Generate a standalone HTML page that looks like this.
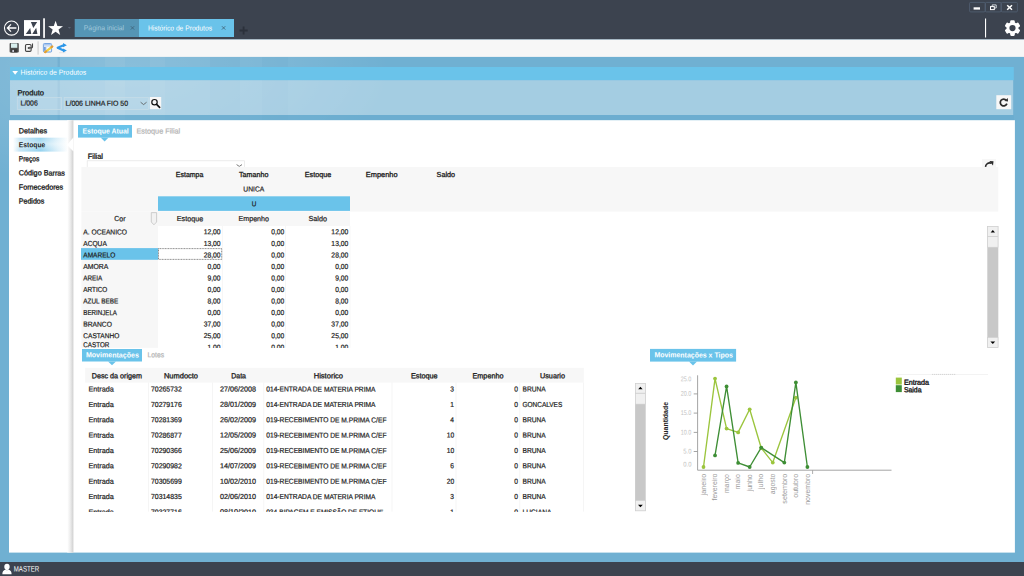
<!DOCTYPE html>
<html lang="pt-BR"><head><meta charset="utf-8"><title>Histórico de Produtos</title>
<style>

html,body{margin:0;padding:0;}
body{width:1024px;height:576px;overflow:hidden;background:#70b0d2;font-family:"Liberation Sans",sans-serif;}
#app{position:relative;width:1024px;height:576px;overflow:hidden;}
svg.bg{position:absolute;left:0;top:0;}
.t{position:absolute;white-space:nowrap;display:block;}
.clip{position:absolute;left:0;top:0;width:1024px;overflow:hidden;}
.rot{position:absolute;width:0;height:0;transform:rotate(-90deg);transform-origin:0 0;}

</style></head>
<body>
<div id="app">
<svg class="bg" width="1024" height="576" viewBox="0 0 1024 576">
<defs>
<radialGradient id="glow" cx="0.5" cy="0.5" r="0.5"><stop offset="0" stop-color="#fff" stop-opacity="0.18"/><stop offset="0.6" stop-color="#fff" stop-opacity="0.09"/><stop offset="1" stop-color="#fff" stop-opacity="0"/></radialGradient>
<linearGradient id="navsel" x1="0" x2="1" y1="0" y2="0"><stop offset="0" stop-color="#fff"/><stop offset="0.12" stop-color="#c2e4f5"/><stop offset="0.5" stop-color="#8fd0ee"/><stop offset="0.8" stop-color="#d8eef9"/><stop offset="1" stop-color="#fff"/></linearGradient>
<linearGradient id="navv" x1="0" x2="0" y1="0" y2="1"><stop offset="0" stop-color="#fff" stop-opacity="0.1"/><stop offset="0.45" stop-color="#fff" stop-opacity="0.45"/><stop offset="1" stop-color="#fff" stop-opacity="0"/></linearGradient>
<linearGradient id="shad" x1="0" x2="1" y1="0" y2="0"><stop offset="0" stop-color="#fff"/><stop offset="0.5" stop-color="#ececec"/><stop offset="1" stop-color="#cfcfcf"/></linearGradient>
</defs>
<rect width="1024" height="576" fill="#70b0d2"/>
<ellipse cx="130" cy="70" rx="260" ry="120" fill="url(#glow)"/>
<rect x="57.6" y="57" width="2.2" height="63" fill="#4f93bd" opacity="0.28"/><rect x="105" y="57" width="20" height="63" fill="#fff" opacity="0.05"/><rect x="150" y="57" width="15" height="63" fill="#fff" opacity="0.045"/><rect x="210" y="57" width="30" height="63" fill="#3f86b3" opacity="0.06"/><rect x="262" y="57" width="26" height="63" fill="#3f86b3" opacity="0.05"/>
<rect width="1024" height="39.5" fill="#3c434f"/>
<rect y="39.5" width="1024" height="17.4" fill="#f7f7f7"/>
<rect x="74.7" y="19" width="64.3" height="18" fill="#5595b5"/>
<rect x="139" y="19" width="95" height="18" fill="#6ac3ea"/>
<circle cx="11.55" cy="28.05" r="7.1" fill="none" stroke="#fff" stroke-width="1.1"/>
<path d="M16.4 28H7.6M11 24.4L7.4 28L11 31.6" fill="none" stroke="#fff" stroke-width="1.3"/>
<rect x="24" y="20.1" width="16" height="15.8" fill="#fff"/>
<path d="M30.9 22H37.2L33.3 27.9Z M25.8 34H31.3L30.2 27.9Z M32.3 34H37.4L36.2 27.7Z" fill="#3c434f"/>
<rect x="43.2" y="18.3" width="1.7" height="19.6" fill="#fff"/>
<polygon points="55.60,20.80 57.42,26.09 63.02,26.19 58.55,29.56 60.18,34.91 55.60,31.70 51.02,34.91 52.65,29.56 48.18,26.19 53.78,26.09" fill="#fff"/>
<path d="M67.8 26.9H71L69.4 28.8Z" fill="#5b6473"/>
<path d="M130.8 26.2L134.2 29.6M134.2 26.2L130.8 29.6" stroke="#3d6279" stroke-width="0.8" fill="none"/>
<path d="M221.9 26.2L225.3 29.6M225.3 26.2L221.9 29.6" stroke="#3f5f73" stroke-width="0.8" fill="none"/>
<path d="M243.6 26.4V34.6M239.5 30.5H247.7" stroke="#2b313b" stroke-width="1.8" fill="none"/>
<rect x="969.6" y="2.4" width="15.5" height="9.5" rx="1" fill="none" stroke="#56657a" stroke-width="0.7"/>
<rect x="985.4" y="2.4" width="15.6" height="9.5" rx="1" fill="none" stroke="#56657a" stroke-width="0.7"/>
<rect x="1001.3" y="2.4" width="16.1" height="9.5" rx="1" fill="none" stroke="#56657a" stroke-width="0.7"/>
<rect x="973.6" y="7.3" width="6.4" height="2.3" fill="#fff"/>
<path d="M992.2 6.6V4.9H996.2V8H994.6" fill="none" stroke="#dfe3e8" stroke-width="0.9"/><rect x="990.5" y="6.6" width="3.8" height="3" fill="none" stroke="#fff" stroke-width="1"/>
<path d="M1007.2 5.2L1012 9.8M1012 5.2L1007.2 9.8" stroke="#fff" stroke-width="1.5" fill="none"/>
<rect x="985" y="18.5" width="1.1" height="19" fill="#fff"/>
<g transform="translate(1012.5,28.1)">
<rect x="-2.3" y="-7.8" width="4.6" height="4.5" rx="1.1" fill="#fff" transform="rotate(0)"/>
<rect x="-2.3" y="-7.8" width="4.6" height="4.5" rx="1.1" fill="#fff" transform="rotate(60)"/>
<rect x="-2.3" y="-7.8" width="4.6" height="4.5" rx="1.1" fill="#fff" transform="rotate(120)"/>
<rect x="-2.3" y="-7.8" width="4.6" height="4.5" rx="1.1" fill="#fff" transform="rotate(180)"/>
<rect x="-2.3" y="-7.8" width="4.6" height="4.5" rx="1.1" fill="#fff" transform="rotate(240)"/>
<rect x="-2.3" y="-7.8" width="4.6" height="4.5" rx="1.1" fill="#fff" transform="rotate(300)"/>
<circle r="6" fill="#fff"/><circle r="3.1" fill="#3c434f"/></g>
<rect x="9.6" y="43.1" width="9.2" height="9.3" rx="0.9" fill="#4d4d4d"/><rect x="11" y="43.4" width="6.3" height="4.4" fill="#d9efee"/><rect x="11.2" y="49.3" width="6" height="3.1" fill="#3a3a3a"/><rect x="12.3" y="49.9" width="1.7" height="2.1" fill="#c9c9d6"/>
<rect x="25.5" y="44.5" width="5.6" height="6.9" rx="1.2" fill="#f7f7f7" stroke="#444" stroke-width="1.15"/><path d="M32.5 43.4V47Q32.5 47.9 31.6 47.9H29.2" fill="none" stroke="#444" stroke-width="1.1"/><path d="M27.3 47.9L29.5 46.4V49.4Z" fill="#333"/>
<rect x="37.5" y="41.3" width="1.2" height="13.3" fill="#d2d2d2"/>
<rect x="43.4" y="43.5" width="8.2" height="8.6" rx="1" fill="#d5e3f6" stroke="#6a9ee0" stroke-width="0.9"/><rect x="43.9" y="44" width="7.2" height="1.3" fill="#a9c6ee"/><rect x="44.3" y="47" width="1.2" height="3.8" fill="#4a7fcf"/><rect x="47" y="47" width="3.6" height="4" fill="#fff" fill-opacity="0.8"/><path d="M45.2 52.1L52.2 46.6" stroke="#f3cf3a" stroke-width="2.1" stroke-linecap="round"/><path d="M45.1 52.2L46.2 51.3M51.4 47.2L52.3 46.5" stroke="#e29a3a" stroke-width="2.1" stroke-linecap="round"/>
<path d="M57.7 47.8L63.6 45.2M57.7 47.8L63.6 50.4" stroke="#2e97e8" stroke-width="2.2" stroke-linecap="round" fill="none"/><path d="M63 43.1L66.9 45.3L63 47.3Z M63 48.4L66.9 50.4L63 52.4Z" fill="#2e97e8"/><rect x="59" y="52.5" width="6.5" height="0.6" fill="#ccc" opacity="0.7"/>
<rect x="10" y="67" width="1003.8" height="13.2" fill="#6ac3ea"/>
<rect x="10" y="80.2" width="1003.2" height="34.8" fill="#fff" fill-opacity="0.37"/>
<rect x="10" y="115" width="1004" height="5" fill="#69abcf" opacity="0.6"/>
<path d="M12.3 71H18L15.15 74.7Z" fill="#fff"/>
<rect x="17.3" y="97.4" width="44.2" height="12" fill="#fff" fill-opacity="0.08" stroke="#c6dce8" stroke-width="0.8"/>
<rect x="64.2" y="97.4" width="84.3" height="12" fill="#fff" fill-opacity="0.08" stroke="#c6dce8" stroke-width="0.8"/>
<path d="M140.6 102.2L143.6 104.6L146.6 102.2" fill="none" stroke="#555" stroke-width="0.8"/>
<rect x="149.8" y="97" width="11.4" height="12.2" fill="#f7f7f7"/>
<circle cx="154.5" cy="102.2" r="2.7" fill="none" stroke="#111" stroke-width="1.2"/><path d="M156.6 104.4L159.6 107.3" stroke="#111" stroke-width="1.7" stroke-linecap="round"/>
<rect x="996.3" y="95.2" width="14.9" height="14" fill="#f7f7f7"/>
<path d="M1006.3 100.3A3.4 3.4 0 1 0 1006.9 103.6" fill="none" stroke="#2b2b2b" stroke-width="1.75"/><path d="M1004.4 100.9L1008 101.4L1007.8 97.9Z" fill="#333"/>
<rect x="9" y="120.2" width="1005.9" height="432.4" fill="#fff"/>
<rect x="13" y="137.7" width="55" height="13.9" fill="url(#navsel)"/><rect x="13" y="137.7" width="55" height="13.9" fill="url(#navv)"/>
<rect x="67.3" y="120.2" width="6.1" height="432.4" fill="url(#shad)"/>
<path d="M73.5 137.3L67 145L73.5 151.6Z" fill="#fff"/>
<rect x="78" y="125" width="54" height="12.6" fill="#6ac3ea"/><path d="M100.6 137.5H108.6L104.6 141.4Z" fill="#6ac3ea"/>
<rect x="87.2" y="160.8" width="157.4" height="10" fill="#fff" stroke="#e3e3e3" stroke-width="0.7"/>
<path d="M236.6 164.6L239.3 166.4L242 164.6" fill="none" stroke="#555" stroke-width="0.8"/>
<rect x="982" y="159" width="14" height="10" fill="#f7f7f7"/>
<path d="M985.5 167.4A4.2 4.2 0 0 1 991.4 163.3" fill="none" stroke="#2b2b2b" stroke-width="1.6"/><path d="M989.3 160.9L993.5 161.2L993 165.6Z" fill="#2b2b2b"/>
<rect x="81.4" y="166.9" width="916.9" height="44.7" fill="#f7f7f7"/>
<rect x="81.4" y="211.5" width="268.6" height="14.6" fill="#f7f7f7"/>
<rect x="81.4" y="226" width="76.7" height="121.8" fill="#f7f7f7"/>
<rect x="158" y="196.3" width="192" height="14.6" fill="#6ac3ea"/>
<rect x="81" y="248.1" width="77.1" height="11.7" fill="#6ac3ea"/>
<path d="M151.3 212.6H156.6V222L153.95 224.8L151.3 222Z" fill="#f2f2f2" stroke="#bdbdbd" stroke-width="0.7"/>
<rect x="221.9" y="226" width="0.8" height="121.8" fill="#f4f4f4"/><rect x="285" y="226" width="0.8" height="121.8" fill="#f4f4f4"/><rect x="349.6" y="226" width="0.8" height="121.8" fill="#f6f6f6"/>
<rect x="158.5" y="248.6" width="63.2" height="10.8" fill="#fff" stroke="#555" stroke-width="0.7" stroke-dasharray="1 0.6"/>
<rect x="987.3" y="226" width="11.00" height="121.70" fill="#c8c8c8"/><rect x="987.60" y="226.30" width="10.40" height="10.10" fill="#f0f0f0" stroke="#cfcfcf" stroke-width="0.6"/><rect x="987.60" y="236.70" width="10.40" height="10.50" fill="#f0f0f0" stroke="#cfcfcf" stroke-width="0.6"/><rect x="987.60" y="337.50" width="10.40" height="9.90" fill="#f0f0f0" stroke="#cfcfcf" stroke-width="0.6"/><path d="M990.60 232.40H995.00L992.80 229.90Z" fill="#000"/><path d="M990.40 341.45H995.20L992.80 344.05Z" fill="#000"/>
<rect x="82" y="349" width="60" height="12.5" fill="#6ac3ea"/><path d="M108 361.4H116L112 365.2Z" fill="#6ac3ea"/>
<rect x="650" y="348.9" width="86.1" height="12.7" fill="#6ac3ea"/><path d="M689 361.5H697L693 365.4Z" fill="#6ac3ea"/>
<rect x="85.2" y="367.8" width="498.6" height="14.8" fill="#f7f7f7"/>
<rect x="148.1" y="382.6" width="0.8" height="129" fill="#f3f3f3"/>
<rect x="212.1" y="382.6" width="0.8" height="129" fill="#f3f3f3"/>
<rect x="263.40000000000003" y="382.6" width="0.8" height="129" fill="#f3f3f3"/>
<rect x="391.6" y="382.6" width="0.8" height="129" fill="#f3f3f3"/>
<rect x="455.6" y="382.6" width="0.8" height="129" fill="#f3f3f3"/>
<rect x="519.4" y="382.6" width="0.8" height="129" fill="#f3f3f3"/>
<rect x="583.2" y="382.6" width="0.8" height="129" fill="#f3f3f3"/>
<rect x="635.1" y="383" width="10.60" height="128.10" fill="#c8c8c8"/><rect x="635.40" y="383.30" width="10.00" height="9.80" fill="#f0f0f0" stroke="#cfcfcf" stroke-width="0.6"/><rect x="635.40" y="393.40" width="10.00" height="10.70" fill="#f0f0f0" stroke="#cfcfcf" stroke-width="0.6"/><rect x="635.40" y="500.50" width="10.00" height="10.30" fill="#f0f0f0" stroke="#cfcfcf" stroke-width="0.6"/><path d="M638.20 389.25H642.60L640.40 386.75Z" fill="#000"/><path d="M638.00 504.65H642.80L640.40 507.25Z" fill="#000"/>
<path d="M697.6 375.3V470.2H891.5" fill="none" stroke="#9a9a9a" stroke-width="0.9"/><path d="M693.7 393.9H697.6" stroke="#9a9a9a" stroke-width="0.9"/><path d="M693.7 413.1H697.6" stroke="#9a9a9a" stroke-width="0.9"/><path d="M693.7 432.4H697.6" stroke="#9a9a9a" stroke-width="0.9"/><path d="M693.7 451.5H697.6" stroke="#9a9a9a" stroke-width="0.9"/><path d="M812.6 470.2V474" stroke="#9a9a9a" stroke-width="0.8"/><path d="M703.50 467 L715.04 378.6 L726.59 428.6 L738.13 432.4 L749.68 409.3 L761.23 448 L772.77 462.6 L795.86 397.7" fill="none" stroke="#9bc53d" stroke-width="1.35" stroke-linejoin="round"/><circle cx="703.50" cy="467" r="1.9" fill="#9bc53d"/><circle cx="715.04" cy="378.6" r="1.9" fill="#9bc53d"/><circle cx="726.59" cy="428.6" r="1.9" fill="#9bc53d"/><circle cx="738.13" cy="432.4" r="1.9" fill="#9bc53d"/><circle cx="749.68" cy="409.3" r="1.9" fill="#9bc53d"/><circle cx="761.23" cy="448" r="1.9" fill="#9bc53d"/><circle cx="772.77" cy="462.6" r="1.9" fill="#9bc53d"/><circle cx="795.86" cy="397.7" r="1.9" fill="#9bc53d"/><path d="M715.04 455.4 L726.59 386.4 L738.13 462.9 L749.68 467 L761.23 447.6 L784.32 462.6 L795.86 382.4 L807.40 467" fill="none" stroke="#3e8e35" stroke-width="1.35" stroke-linejoin="round"/><circle cx="715.04" cy="455.4" r="1.9" fill="#3e8e35"/><circle cx="726.59" cy="386.4" r="1.9" fill="#3e8e35"/><circle cx="738.13" cy="462.9" r="1.9" fill="#3e8e35"/><circle cx="749.68" cy="467" r="1.9" fill="#3e8e35"/><circle cx="761.23" cy="447.6" r="1.9" fill="#3e8e35"/><circle cx="784.32" cy="462.6" r="1.9" fill="#3e8e35"/><circle cx="795.86" cy="382.4" r="1.9" fill="#3e8e35"/><circle cx="807.40" cy="467" r="1.9" fill="#3e8e35"/><rect x="897" y="374.2" width="91" height="0.5" fill="#e6e6e6"/><path d="M932 374.4H956" stroke="#bdbdbd" stroke-width="0.6" stroke-dasharray="1.2 0.8"/><rect x="895.8" y="377.6" width="6" height="6.9" fill="#9bc53d"/><rect x="895.8" y="385.2" width="6" height="6.9" fill="#3e8e35"/>
<rect y="562" width="1024" height="14" fill="#3c434f"/>
<ellipse cx="7" cy="566.7" rx="2.7" ry="3" fill="#fff"/><path d="M2.4 574.2C2.4 570.6 4.5 570.2 5.6 569.6L7 570.4L8.4 569.6C9.5 570.2 11.6 570.6 11.6 574.2Z" fill="#fff"/><rect x="5.8" y="568" width="2.4" height="2.4" fill="#fff"/>
</svg>
<span class="t" id="t0" style="top:24px;font-size:7.2px;line-height:7.2px;color:#a3c9dc;left:83px;transform-origin:0 50%;transform:translate(0.80px,0.28px) scaleX(0.9487) rotate(0.1deg);-webkit-text-stroke:0;">Página inicial</span>
<span class="t" id="t1" style="top:24px;font-size:7.2px;line-height:7.2px;color:#fff;left:148px;transform-origin:0 50%;transform:translate(0.00px,0.38px) scaleX(0.9312) rotate(0.1deg);-webkit-text-stroke:0;">Histórico de Produtos</span>
<span class="t" id="t2" style="top:68px;font-size:7.2px;line-height:7.2px;color:#fff;left:20px;transform-origin:0 50%;transform:translate(0.60px,0.68px) scaleX(0.9544) rotate(0.1deg);-webkit-text-stroke:0;">Histórico de Produtos</span>
<span class="t" id="t3" style="top:89px;font-size:7.3px;line-height:7.3px;color:#1e1e1e;left:17px;transform-origin:0 50%;transform:translate(0.50px,0.23px) scaleX(1.0362) rotate(0.1deg);-webkit-text-stroke:0.32px #1e1e1e;">Produto</span>
<span class="t" id="t4" style="top:99px;font-size:7.3px;line-height:7.3px;color:#1e1e1e;left:20px;transform-origin:0 50%;transform:translate(0.60px,0.43px) scaleX(0.9355) rotate(0.1deg);-webkit-text-stroke:0.22px #1e1e1e;">L/006</span>
<span class="t" id="t5" style="top:99px;font-size:7.3px;line-height:7.3px;color:#1e1e1e;left:65px;transform-origin:0 50%;transform:translate(0.60px,0.73px) scaleX(0.9508) rotate(0.1deg);-webkit-text-stroke:0.22px #1e1e1e;">L/006 LINHA FIO 50</span>
<span class="t" id="t6" style="top:127px;font-size:7.3px;line-height:7.3px;color:#1e1e1e;left:18px;transform-origin:0 50%;transform:translate(0.75px,0.23px) scaleX(0.9887) rotate(0.1deg);-webkit-text-stroke:0.32px #1e1e1e;">Detalhes</span>
<span class="t" id="t7" style="top:141px;font-size:7.3px;line-height:7.3px;color:#1e1e1e;font-weight:700;left:18px;transform-origin:0 50%;transform:translate(0.75px,0.23px) scaleX(0.9198) rotate(0.1deg);">Estoque</span>
<span class="t" id="t8" style="top:155px;font-size:7.3px;line-height:7.3px;color:#1e1e1e;left:18px;transform-origin:0 50%;transform:translate(0.75px,0.33px) scaleX(0.9062) rotate(0.1deg);-webkit-text-stroke:0.32px #1e1e1e;">Preços</span>
<span class="t" id="t9" style="top:169px;font-size:7.3px;line-height:7.3px;color:#1e1e1e;left:18px;transform-origin:0 50%;transform:translate(0.75px,0.33px) scaleX(0.9910) rotate(0.1deg);-webkit-text-stroke:0.32px #1e1e1e;">Código Barras</span>
<span class="t" id="t10" style="top:183px;font-size:7.3px;line-height:7.3px;color:#1e1e1e;left:18px;transform-origin:0 50%;transform:translate(0.75px,0.53px) scaleX(0.9857) rotate(0.1deg);-webkit-text-stroke:0.32px #1e1e1e;">Fornecedores</span>
<span class="t" id="t11" style="top:197px;font-size:7.3px;line-height:7.3px;color:#1e1e1e;left:18px;transform-origin:0 50%;transform:translate(0.75px,0.53px) scaleX(0.9701) rotate(0.1deg);-webkit-text-stroke:0.32px #1e1e1e;">Pedidos</span>
<span class="t" id="t12" style="top:127px;font-size:7.3px;line-height:7.3px;color:#fff;font-weight:700;left:82px;transform-origin:0 50%;transform:translate(0.50px,0.53px) scaleX(0.9476) rotate(0.1deg);">Estoque Atual</span>
<span class="t" id="t13" style="top:127px;font-size:7.3px;line-height:7.3px;color:#b4b4b4;left:136px;transform-origin:0 50%;transform:translate(0.50px,0.53px) scaleX(0.9983) rotate(0.1deg);-webkit-text-stroke:0.22px #b4b4b4;">Estoque Filial</span>
<span class="t" id="t14" style="top:152px;font-size:7.3px;line-height:7.3px;color:#1e1e1e;left:87px;transform-origin:0 50%;transform:translate(0.75px,0.73px) scaleX(1.0158) rotate(0.1deg);-webkit-text-stroke:0.32px #1e1e1e;">Filial</span>
<span class="t" id="t15" style="top:171px;font-size:7.3px;line-height:7.3px;color:#1e1e1e;left:189px;transform-origin:50% 50%;transform:translate(calc(-50% + 0.60px),0.03px) scaleX(0.9545) rotate(0.1deg);-webkit-text-stroke:0.32px #1e1e1e;">Estampa</span>
<span class="t" id="t16" style="top:171px;font-size:7.3px;line-height:7.3px;color:#1e1e1e;left:253px;transform-origin:50% 50%;transform:translate(calc(-50% + 0.70px),0.03px) scaleX(0.9786) rotate(0.1deg);-webkit-text-stroke:0.32px #1e1e1e;">Tamanho</span>
<span class="t" id="t17" style="top:171px;font-size:7.3px;line-height:7.3px;color:#1e1e1e;left:318px;transform-origin:50% 50%;transform:translate(calc(-50% + 0.00px),0.03px) scaleX(0.9853) rotate(0.1deg);-webkit-text-stroke:0.32px #1e1e1e;">Estoque</span>
<span class="t" id="t18" style="top:171px;font-size:7.3px;line-height:7.3px;color:#1e1e1e;left:381px;transform-origin:50% 50%;transform:translate(calc(-50% + 0.70px),0.03px) scaleX(1.0140) rotate(0.1deg);-webkit-text-stroke:0.32px #1e1e1e;">Empenho</span>
<span class="t" id="t19" style="top:171px;font-size:7.3px;line-height:7.3px;color:#1e1e1e;left:445px;transform-origin:50% 50%;transform:translate(calc(-50% + 0.80px),0.03px) scaleX(0.9848) rotate(0.1deg);-webkit-text-stroke:0.32px #1e1e1e;">Saldo</span>
<span class="t" id="t20" style="top:185px;font-size:7.3px;line-height:7.3px;color:#1e1e1e;left:253px;transform-origin:50% 50%;transform:translate(calc(-50% + 0.80px),0.53px) scaleX(0.9201) rotate(0.1deg);-webkit-text-stroke:0.22px #1e1e1e;">UNICA</span>
<span class="t" id="t21" style="top:200px;font-size:7.3px;line-height:7.3px;color:#1e1e1e;left:254px;transform-origin:50% 50%;transform:translate(calc(-50% + 0.00px),0.13px) scaleX(0.8689) rotate(0.1deg);-webkit-text-stroke:0.22px #1e1e1e;">U</span>
<span class="t" id="t22" style="top:215px;font-size:7.3px;line-height:7.3px;color:#1e1e1e;left:119px;transform-origin:50% 50%;transform:translate(calc(-50% + 0.90px),0.13px) scaleX(0.9551) rotate(0.1deg);-webkit-text-stroke:0.22px #1e1e1e;">Cor</span>
<span class="t" id="t23" style="top:215px;font-size:7.3px;line-height:7.3px;color:#1e1e1e;left:190px;transform-origin:50% 50%;transform:translate(calc(-50% + 0.00px),0.13px) scaleX(0.9853) rotate(0.1deg);-webkit-text-stroke:0.22px #1e1e1e;">Estoque</span>
<span class="t" id="t24" style="top:215px;font-size:7.3px;line-height:7.3px;color:#1e1e1e;left:253px;transform-origin:50% 50%;transform:translate(calc(-50% + 0.75px),0.13px) scaleX(0.9756) rotate(0.1deg);-webkit-text-stroke:0.22px #1e1e1e;">Empenho</span>
<span class="t" id="t25" style="top:215px;font-size:7.3px;line-height:7.3px;color:#1e1e1e;left:317px;transform-origin:50% 50%;transform:translate(calc(-50% + 0.70px),0.13px) scaleX(0.9848) rotate(0.1deg);-webkit-text-stroke:0.22px #1e1e1e;">Saldo</span>
<span class="t" id="t70" style="top:351px;font-size:7.3px;line-height:7.3px;color:#fff;font-weight:700;left:85px;transform-origin:0 50%;transform:translate(0.90px,0.33px) scaleX(0.9678) rotate(0.1deg);">Movimentações</span>
<span class="t" id="t71" style="top:351px;font-size:7.3px;line-height:7.3px;color:#b4b4b4;left:147px;transform-origin:0 50%;transform:translate(0.60px,0.33px) scaleX(0.9232) rotate(0.1deg);-webkit-text-stroke:0.22px #b4b4b4;">Lotes</span>
<span class="t" id="t72" style="top:351px;font-size:7.3px;line-height:7.3px;color:#fff;font-weight:700;left:654px;transform-origin:0 50%;transform:translate(0.40px,0.33px) scaleX(0.9550) rotate(0.1deg);">Movimentações x Tipos</span>
<span class="t" id="t73" style="top:372px;font-size:7.3px;line-height:7.3px;color:#1e1e1e;left:116px;transform-origin:50% 50%;transform:translate(calc(-50% + 0.90px),0.23px) scaleX(0.9829) rotate(0.1deg);-webkit-text-stroke:0.32px #1e1e1e;">Desc da origem</span>
<span class="t" id="t74" style="top:372px;font-size:7.3px;line-height:7.3px;color:#1e1e1e;left:181px;transform-origin:50% 50%;transform:translate(calc(-50% + 0.00px),0.23px) scaleX(1.0247) rotate(0.1deg);-webkit-text-stroke:0.32px #1e1e1e;">Numdocto</span>
<span class="t" id="t75" style="top:372px;font-size:7.3px;line-height:7.3px;color:#1e1e1e;left:238px;transform-origin:50% 50%;transform:translate(calc(-50% + 0.60px),0.23px) scaleX(0.9556) rotate(0.1deg);-webkit-text-stroke:0.32px #1e1e1e;">Data</span>
<span class="t" id="t76" style="top:372px;font-size:7.3px;line-height:7.3px;color:#1e1e1e;left:328px;transform-origin:50% 50%;transform:translate(calc(-50% + 0.40px),0.23px) scaleX(1.0316) rotate(0.1deg);-webkit-text-stroke:0.32px #1e1e1e;">Historico</span>
<span class="t" id="t77" style="top:372px;font-size:7.3px;line-height:7.3px;color:#1e1e1e;left:424px;transform-origin:50% 50%;transform:translate(calc(-50% + 0.25px),0.23px) scaleX(0.9984) rotate(0.1deg);-webkit-text-stroke:0.32px #1e1e1e;">Estoque</span>
<span class="t" id="t78" style="top:372px;font-size:7.3px;line-height:7.3px;color:#1e1e1e;left:488px;transform-origin:50% 50%;transform:translate(calc(-50% + 0.00px),0.23px) scaleX(0.9916) rotate(0.1deg);-webkit-text-stroke:0.32px #1e1e1e;">Empenho</span>
<span class="t" id="t79" style="top:372px;font-size:7.3px;line-height:7.3px;color:#1e1e1e;left:552px;transform-origin:50% 50%;transform:translate(calc(-50% + 0.50px),0.23px) scaleX(0.9933) rotate(0.1deg);-webkit-text-stroke:0.32px #1e1e1e;">Usuario</span>
<span class="t" id="t143" style="top:376px;font-size:6.8px;line-height:6.8px;color:#c2c2c2;right:333px;transform-origin:100% 50%;transform:translate(0.00px,0.38px) scaleX(0.8002) rotate(0.1deg);-webkit-text-stroke:0;">25.0</span>
<span class="t" id="t144" style="top:390px;font-size:6.8px;line-height:6.8px;color:#c2c2c2;right:333px;transform-origin:100% 50%;transform:translate(0.00px,0.68px) scaleX(0.8002) rotate(0.1deg);-webkit-text-stroke:0;">20.0</span>
<span class="t" id="t145" style="top:410px;font-size:6.8px;line-height:6.8px;color:#c2c2c2;right:333px;transform-origin:100% 50%;transform:translate(0.00px,0.08px) scaleX(0.8002) rotate(0.1deg);-webkit-text-stroke:0;">15.0</span>
<span class="t" id="t146" style="top:429px;font-size:6.8px;line-height:6.8px;color:#c2c2c2;right:333px;transform-origin:100% 50%;transform:translate(0.00px,0.48px) scaleX(0.8002) rotate(0.1deg);-webkit-text-stroke:0;">10.0</span>
<span class="t" id="t147" style="top:448px;font-size:6.8px;line-height:6.8px;color:#c2c2c2;right:333px;transform-origin:100% 50%;transform:translate(0.00px,0.48px) scaleX(0.8664) rotate(0.1deg);-webkit-text-stroke:0;">5.0</span>
<span class="t" id="t148" style="top:461px;font-size:6.8px;line-height:6.8px;color:#c2c2c2;right:333px;transform-origin:100% 50%;transform:translate(0.00px,0.58px) scaleX(0.8664) rotate(0.1deg);-webkit-text-stroke:0;">0.0</span>
<div class="rot" style="left:666.00px;top:420.50px"><span class="t r" id="t149" style="left:0;transform-origin:50% 50%;top:-3.32px;font-size:6.8px;line-height:6.8px;color:#222;transform:translateX(-50%) scaleX(1.0163);font-weight:700;">Quantidade</span></div>
<div class="rot" style="left:703.70px;top:473.90px"><span class="t r" id="t150" style="right:0;transform-origin:100% 50%;top:-3.32px;font-size:6.8px;line-height:6.8px;color:#9a9a9a;transform:scaleX(1.0732);">janeiro</span></div>
<div class="rot" style="left:715.25px;top:473.90px"><span class="t r" id="t151" style="right:0;transform-origin:100% 50%;top:-3.32px;font-size:6.8px;line-height:6.8px;color:#9a9a9a;transform:scaleX(1.0207);">fevereiro</span></div>
<div class="rot" style="left:726.79px;top:473.90px"><span class="t r" id="t152" style="right:0;transform-origin:100% 50%;top:-3.32px;font-size:6.8px;line-height:6.8px;color:#9a9a9a;transform:scaleX(1.0058);">março</span></div>
<div class="rot" style="left:738.34px;top:473.90px"><span class="t r" id="t153" style="right:0;transform-origin:100% 50%;top:-3.32px;font-size:6.8px;line-height:6.8px;color:#9a9a9a;transform:scaleX(1.0180);">maio</span></div>
<div class="rot" style="left:749.88px;top:473.90px"><span class="t r" id="t154" style="right:0;transform-origin:100% 50%;top:-3.32px;font-size:6.8px;line-height:6.8px;color:#9a9a9a;transform:scaleX(1.0216);">junho</span></div>
<div class="rot" style="left:761.43px;top:473.90px"><span class="t r" id="t155" style="right:0;transform-origin:100% 50%;top:-3.32px;font-size:6.8px;line-height:6.8px;color:#9a9a9a;transform:scaleX(1.0713);">julho</span></div>
<div class="rot" style="left:772.97px;top:473.90px"><span class="t r" id="t156" style="right:0;transform-origin:100% 50%;top:-3.32px;font-size:6.8px;line-height:6.8px;color:#9a9a9a;transform:scaleX(1.0087);">agosto</span></div>
<div class="rot" style="left:784.52px;top:473.90px"><span class="t r" id="t157" style="right:0;transform-origin:100% 50%;top:-3.32px;font-size:6.8px;line-height:6.8px;color:#9a9a9a;transform:scaleX(1.0584);">setembro</span></div>
<div class="rot" style="left:796.06px;top:473.90px"><span class="t r" id="t158" style="right:0;transform-origin:100% 50%;top:-3.32px;font-size:6.8px;line-height:6.8px;color:#9a9a9a;transform:scaleX(1.0298);">outubro</span></div>
<div class="rot" style="left:807.61px;top:473.90px"><span class="t r" id="t159" style="right:0;transform-origin:100% 50%;top:-3.32px;font-size:6.8px;line-height:6.8px;color:#9a9a9a;transform:scaleX(1.0253);">novembro</span></div>
<span class="t" id="t160" style="top:378px;font-size:7.3px;line-height:7.3px;color:#1e1e1e;left:903px;transform-origin:0 50%;transform:translate(0.90px,0.73px) scaleX(0.9853) rotate(0.1deg);-webkit-text-stroke:0.4px #1e1e1e;">Entrada</span>
<span class="t" id="t161" style="top:386px;font-size:7.3px;line-height:7.3px;color:#1e1e1e;left:903px;transform-origin:0 50%;transform:translate(0.90px,0.33px) scaleX(0.9420) rotate(0.1deg);-webkit-text-stroke:0.4px #1e1e1e;">Saida</span>
<span class="t" id="t162" style="top:565px;font-size:7.8px;line-height:7.8px;color:#fff;left:13px;transform-origin:0 50%;transform:translate(0.80px,0.49px) scaleX(0.7812) rotate(0.1deg);-webkit-text-stroke:0;">MASTER</span>
<div class="clip" style="height:348px"><span class="t" id="t26" style="top:228px;font-size:7.3px;line-height:7.3px;color:#1e1e1e;left:83px;transform-origin:0 50%;transform:translate(0.30px,0.38px) scaleX(0.9142) rotate(0.1deg);-webkit-text-stroke:0.22px #1e1e1e;">A. OCEANICO</span>
<span class="t" id="t27" style="top:228px;font-size:7.3px;line-height:7.3px;color:#1e1e1e;right:804px;transform-origin:100% 50%;transform:translate(0.30px,0.38px) scaleX(0.9246) rotate(0.1deg);-webkit-text-stroke:0.22px #1e1e1e;">12,00</span>
<span class="t" id="t28" style="top:228px;font-size:7.3px;line-height:7.3px;color:#1e1e1e;right:740px;transform-origin:100% 50%;transform:translate(0.00px,0.38px) scaleX(0.9145) rotate(0.1deg);-webkit-text-stroke:0.22px #1e1e1e;">0,00</span>
<span class="t" id="t29" style="top:228px;font-size:7.3px;line-height:7.3px;color:#1e1e1e;right:676px;transform-origin:100% 50%;transform:translate(0.00px,0.38px) scaleX(0.9246) rotate(0.1deg);-webkit-text-stroke:0.22px #1e1e1e;">12,00</span>
<span class="t" id="t30" style="top:239px;font-size:7.3px;line-height:7.3px;color:#1e1e1e;left:83px;transform-origin:0 50%;transform:translate(0.30px,0.91px) scaleX(0.9050) rotate(0.1deg);-webkit-text-stroke:0.22px #1e1e1e;">ACQUA</span>
<span class="t" id="t31" style="top:239px;font-size:7.3px;line-height:7.3px;color:#1e1e1e;right:804px;transform-origin:100% 50%;transform:translate(0.30px,0.91px) scaleX(0.9246) rotate(0.1deg);-webkit-text-stroke:0.22px #1e1e1e;">13,00</span>
<span class="t" id="t32" style="top:239px;font-size:7.3px;line-height:7.3px;color:#1e1e1e;right:740px;transform-origin:100% 50%;transform:translate(0.00px,0.91px) scaleX(0.9145) rotate(0.1deg);-webkit-text-stroke:0.22px #1e1e1e;">0,00</span>
<span class="t" id="t33" style="top:239px;font-size:7.3px;line-height:7.3px;color:#1e1e1e;right:676px;transform-origin:100% 50%;transform:translate(0.00px,0.91px) scaleX(0.9246) rotate(0.1deg);-webkit-text-stroke:0.22px #1e1e1e;">13,00</span>
<span class="t" id="t34" style="top:251px;font-size:7.3px;line-height:7.3px;color:#1e1e1e;left:83px;transform-origin:0 50%;transform:translate(0.30px,0.44px) scaleX(0.8964) rotate(0.1deg);-webkit-text-stroke:0.22px #1e1e1e;">AMARELO</span>
<span class="t" id="t35" style="top:251px;font-size:7.3px;line-height:7.3px;color:#1e1e1e;right:804px;transform-origin:100% 50%;transform:translate(0.30px,0.44px) scaleX(0.9246) rotate(0.1deg);-webkit-text-stroke:0.22px #1e1e1e;">28,00</span>
<span class="t" id="t36" style="top:251px;font-size:7.3px;line-height:7.3px;color:#1e1e1e;right:740px;transform-origin:100% 50%;transform:translate(0.00px,0.44px) scaleX(0.9145) rotate(0.1deg);-webkit-text-stroke:0.22px #1e1e1e;">0,00</span>
<span class="t" id="t37" style="top:251px;font-size:7.3px;line-height:7.3px;color:#1e1e1e;right:676px;transform-origin:100% 50%;transform:translate(0.00px,0.44px) scaleX(0.9246) rotate(0.1deg);-webkit-text-stroke:0.22px #1e1e1e;">28,00</span>
<span class="t" id="t38" style="top:262px;font-size:7.3px;line-height:7.3px;color:#1e1e1e;left:83px;transform-origin:0 50%;transform:translate(0.30px,0.97px) scaleX(0.9336) rotate(0.1deg);-webkit-text-stroke:0.22px #1e1e1e;">AMORA</span>
<span class="t" id="t39" style="top:262px;font-size:7.3px;line-height:7.3px;color:#1e1e1e;right:804px;transform-origin:100% 50%;transform:translate(0.30px,0.97px) scaleX(0.9145) rotate(0.1deg);-webkit-text-stroke:0.22px #1e1e1e;">0,00</span>
<span class="t" id="t40" style="top:262px;font-size:7.3px;line-height:7.3px;color:#1e1e1e;right:740px;transform-origin:100% 50%;transform:translate(0.00px,0.97px) scaleX(0.9145) rotate(0.1deg);-webkit-text-stroke:0.22px #1e1e1e;">0,00</span>
<span class="t" id="t41" style="top:262px;font-size:7.3px;line-height:7.3px;color:#1e1e1e;right:676px;transform-origin:100% 50%;transform:translate(0.00px,0.97px) scaleX(0.9145) rotate(0.1deg);-webkit-text-stroke:0.22px #1e1e1e;">0,00</span>
<span class="t" id="t42" style="top:274px;font-size:7.3px;line-height:7.3px;color:#1e1e1e;left:83px;transform-origin:0 50%;transform:translate(0.30px,0.50px) scaleX(0.8668) rotate(0.1deg);-webkit-text-stroke:0.22px #1e1e1e;">AREIA</span>
<span class="t" id="t43" style="top:274px;font-size:7.3px;line-height:7.3px;color:#1e1e1e;right:804px;transform-origin:100% 50%;transform:translate(0.30px,0.50px) scaleX(0.9145) rotate(0.1deg);-webkit-text-stroke:0.22px #1e1e1e;">9,00</span>
<span class="t" id="t44" style="top:274px;font-size:7.3px;line-height:7.3px;color:#1e1e1e;right:740px;transform-origin:100% 50%;transform:translate(0.00px,0.50px) scaleX(0.9145) rotate(0.1deg);-webkit-text-stroke:0.22px #1e1e1e;">0,00</span>
<span class="t" id="t45" style="top:274px;font-size:7.3px;line-height:7.3px;color:#1e1e1e;right:676px;transform-origin:100% 50%;transform:translate(0.00px,0.50px) scaleX(0.9145) rotate(0.1deg);-webkit-text-stroke:0.22px #1e1e1e;">9,00</span>
<span class="t" id="t46" style="top:286px;font-size:7.3px;line-height:7.3px;color:#1e1e1e;left:83px;transform-origin:0 50%;transform:translate(0.30px,0.03px) scaleX(0.8743) rotate(0.1deg);-webkit-text-stroke:0.22px #1e1e1e;">ARTICO</span>
<span class="t" id="t47" style="top:286px;font-size:7.3px;line-height:7.3px;color:#1e1e1e;right:804px;transform-origin:100% 50%;transform:translate(0.30px,0.03px) scaleX(0.9145) rotate(0.1deg);-webkit-text-stroke:0.22px #1e1e1e;">0,00</span>
<span class="t" id="t48" style="top:286px;font-size:7.3px;line-height:7.3px;color:#1e1e1e;right:740px;transform-origin:100% 50%;transform:translate(0.00px,0.03px) scaleX(0.9145) rotate(0.1deg);-webkit-text-stroke:0.22px #1e1e1e;">0,00</span>
<span class="t" id="t49" style="top:286px;font-size:7.3px;line-height:7.3px;color:#1e1e1e;right:676px;transform-origin:100% 50%;transform:translate(0.00px,0.03px) scaleX(0.9145) rotate(0.1deg);-webkit-text-stroke:0.22px #1e1e1e;">0,00</span>
<span class="t" id="t50" style="top:297px;font-size:7.3px;line-height:7.3px;color:#1e1e1e;left:83px;transform-origin:0 50%;transform:translate(0.30px,0.56px) scaleX(0.8771) rotate(0.1deg);-webkit-text-stroke:0.22px #1e1e1e;">AZUL BEBE</span>
<span class="t" id="t51" style="top:297px;font-size:7.3px;line-height:7.3px;color:#1e1e1e;right:804px;transform-origin:100% 50%;transform:translate(0.30px,0.56px) scaleX(0.9145) rotate(0.1deg);-webkit-text-stroke:0.22px #1e1e1e;">8,00</span>
<span class="t" id="t52" style="top:297px;font-size:7.3px;line-height:7.3px;color:#1e1e1e;right:740px;transform-origin:100% 50%;transform:translate(0.00px,0.56px) scaleX(0.9145) rotate(0.1deg);-webkit-text-stroke:0.22px #1e1e1e;">0,00</span>
<span class="t" id="t53" style="top:297px;font-size:7.3px;line-height:7.3px;color:#1e1e1e;right:676px;transform-origin:100% 50%;transform:translate(0.00px,0.56px) scaleX(0.9145) rotate(0.1deg);-webkit-text-stroke:0.22px #1e1e1e;">8,00</span>
<span class="t" id="t54" style="top:309px;font-size:7.3px;line-height:7.3px;color:#1e1e1e;left:83px;transform-origin:0 50%;transform:translate(0.30px,0.09px) scaleX(0.8475) rotate(0.1deg);-webkit-text-stroke:0.22px #1e1e1e;">BERINJELA</span>
<span class="t" id="t55" style="top:309px;font-size:7.3px;line-height:7.3px;color:#1e1e1e;right:804px;transform-origin:100% 50%;transform:translate(0.30px,0.09px) scaleX(0.9145) rotate(0.1deg);-webkit-text-stroke:0.22px #1e1e1e;">0,00</span>
<span class="t" id="t56" style="top:309px;font-size:7.3px;line-height:7.3px;color:#1e1e1e;right:740px;transform-origin:100% 50%;transform:translate(0.00px,0.09px) scaleX(0.9145) rotate(0.1deg);-webkit-text-stroke:0.22px #1e1e1e;">0,00</span>
<span class="t" id="t57" style="top:309px;font-size:7.3px;line-height:7.3px;color:#1e1e1e;right:676px;transform-origin:100% 50%;transform:translate(0.00px,0.09px) scaleX(0.9145) rotate(0.1deg);-webkit-text-stroke:0.22px #1e1e1e;">0,00</span>
<span class="t" id="t58" style="top:320px;font-size:7.3px;line-height:7.3px;color:#1e1e1e;left:83px;transform-origin:0 50%;transform:translate(0.30px,0.62px) scaleX(0.9157) rotate(0.1deg);-webkit-text-stroke:0.22px #1e1e1e;">BRANCO</span>
<span class="t" id="t59" style="top:320px;font-size:7.3px;line-height:7.3px;color:#1e1e1e;right:804px;transform-origin:100% 50%;transform:translate(0.30px,0.62px) scaleX(0.9246) rotate(0.1deg);-webkit-text-stroke:0.22px #1e1e1e;">37,00</span>
<span class="t" id="t60" style="top:320px;font-size:7.3px;line-height:7.3px;color:#1e1e1e;right:740px;transform-origin:100% 50%;transform:translate(0.00px,0.62px) scaleX(0.9145) rotate(0.1deg);-webkit-text-stroke:0.22px #1e1e1e;">0,00</span>
<span class="t" id="t61" style="top:320px;font-size:7.3px;line-height:7.3px;color:#1e1e1e;right:676px;transform-origin:100% 50%;transform:translate(0.00px,0.62px) scaleX(0.9246) rotate(0.1deg);-webkit-text-stroke:0.22px #1e1e1e;">37,00</span>
<span class="t" id="t62" style="top:332px;font-size:7.3px;line-height:7.3px;color:#1e1e1e;left:83px;transform-origin:0 50%;transform:translate(0.30px,0.15px) scaleX(0.8994) rotate(0.1deg);-webkit-text-stroke:0.22px #1e1e1e;">CASTANHO</span>
<span class="t" id="t63" style="top:332px;font-size:7.3px;line-height:7.3px;color:#1e1e1e;right:804px;transform-origin:100% 50%;transform:translate(0.30px,0.15px) scaleX(0.9246) rotate(0.1deg);-webkit-text-stroke:0.22px #1e1e1e;">25,00</span>
<span class="t" id="t64" style="top:332px;font-size:7.3px;line-height:7.3px;color:#1e1e1e;right:740px;transform-origin:100% 50%;transform:translate(0.00px,0.15px) scaleX(0.9145) rotate(0.1deg);-webkit-text-stroke:0.22px #1e1e1e;">0,00</span>
<span class="t" id="t65" style="top:332px;font-size:7.3px;line-height:7.3px;color:#1e1e1e;right:676px;transform-origin:100% 50%;transform:translate(0.00px,0.15px) scaleX(0.9246) rotate(0.1deg);-webkit-text-stroke:0.22px #1e1e1e;">25,00</span>
<span class="t" id="t66" style="top:341px;font-size:7.3px;line-height:7.3px;color:#1e1e1e;left:83px;transform-origin:0 50%;transform:translate(0.30px,0.33px) scaleX(0.8583) rotate(0.1deg);-webkit-text-stroke:0.22px #1e1e1e;">CASTOR</span>
<span class="t" id="t67" style="top:343px;font-size:7.3px;line-height:7.3px;color:#1e1e1e;right:804px;transform-origin:100% 50%;transform:translate(0.30px,0.68px) scaleX(0.9145) rotate(0.1deg);-webkit-text-stroke:0.22px #1e1e1e;">1,00</span>
<span class="t" id="t68" style="top:343px;font-size:7.3px;line-height:7.3px;color:#1e1e1e;right:740px;transform-origin:100% 50%;transform:translate(0.00px,0.68px) scaleX(0.9145) rotate(0.1deg);-webkit-text-stroke:0.22px #1e1e1e;">0,00</span>
<span class="t" id="t69" style="top:343px;font-size:7.3px;line-height:7.3px;color:#1e1e1e;right:676px;transform-origin:100% 50%;transform:translate(0.00px,0.68px) scaleX(0.9145) rotate(0.1deg);-webkit-text-stroke:0.22px #1e1e1e;">1,00</span></div>
<div class="clip" style="height:512px"><span class="t" id="t80" style="top:385px;font-size:7.3px;line-height:7.3px;color:#1e1e1e;left:88px;transform-origin:0 50%;transform:translate(0.50px,0.53px) scaleX(0.9931) rotate(0.1deg);-webkit-text-stroke:0.22px #1e1e1e;">Entrada</span>
<span class="t" id="t81" style="top:385px;font-size:7.3px;line-height:7.3px;color:#1e1e1e;left:151px;transform-origin:0 50%;transform:translate(0.00px,0.53px) scaleX(0.9467) rotate(0.1deg);-webkit-text-stroke:0.22px #1e1e1e;">70265732</span>
<span class="t" id="t82" style="top:385px;font-size:7.3px;line-height:7.3px;color:#1e1e1e;right:768px;transform-origin:100% 50%;transform:translate(0.50px,0.53px) scaleX(0.9851) rotate(0.1deg);-webkit-text-stroke:0.22px #1e1e1e;">27/06/2008</span>
<span class="t" id="t83" style="top:385px;font-size:7.3px;line-height:7.3px;color:#1e1e1e;left:266px;transform-origin:0 50%;transform:translate(0.25px,0.53px) scaleX(0.9112) rotate(0.1deg);-webkit-text-stroke:0.22px #1e1e1e;">014-ENTRADA DE MATERIA PRIMA</span>
<span class="t" id="t84" style="top:385px;font-size:7.3px;line-height:7.3px;color:#1e1e1e;right:570px;transform-origin:100% 50%;transform:translate(0.00px,0.53px) scaleX(0.9079) rotate(0.1deg);-webkit-text-stroke:0.22px #1e1e1e;">3</span>
<span class="t" id="t85" style="top:385px;font-size:7.3px;line-height:7.3px;color:#1e1e1e;right:506px;transform-origin:100% 50%;transform:translate(0.00px,0.53px) scaleX(0.9202) rotate(0.1deg);-webkit-text-stroke:0.22px #1e1e1e;">0</span>
<span class="t" id="t86" style="top:385px;font-size:7.3px;line-height:7.3px;color:#1e1e1e;left:522px;transform-origin:0 50%;transform:translate(0.50px,0.53px) scaleX(0.9096) rotate(0.1deg);-webkit-text-stroke:0.22px #1e1e1e;">BRUNA</span>
<span class="t" id="t87" style="top:400px;font-size:7.3px;line-height:7.3px;color:#1e1e1e;left:88px;transform-origin:0 50%;transform:translate(0.50px,0.89px) scaleX(0.9931) rotate(0.1deg);-webkit-text-stroke:0.22px #1e1e1e;">Entrada</span>
<span class="t" id="t88" style="top:400px;font-size:7.3px;line-height:7.3px;color:#1e1e1e;left:151px;transform-origin:0 50%;transform:translate(0.00px,0.89px) scaleX(0.9467) rotate(0.1deg);-webkit-text-stroke:0.22px #1e1e1e;">70279176</span>
<span class="t" id="t89" style="top:400px;font-size:7.3px;line-height:7.3px;color:#1e1e1e;right:768px;transform-origin:100% 50%;transform:translate(0.50px,0.89px) scaleX(0.9851) rotate(0.1deg);-webkit-text-stroke:0.22px #1e1e1e;">28/01/2009</span>
<span class="t" id="t90" style="top:400px;font-size:7.3px;line-height:7.3px;color:#1e1e1e;left:266px;transform-origin:0 50%;transform:translate(0.25px,0.89px) scaleX(0.9112) rotate(0.1deg);-webkit-text-stroke:0.22px #1e1e1e;">014-ENTRADA DE MATERIA PRIMA</span>
<span class="t" id="t91" style="top:400px;font-size:7.3px;line-height:7.3px;color:#1e1e1e;right:570px;transform-origin:100% 50%;transform:translate(0.00px,0.89px) scaleX(0.9079) rotate(0.1deg);-webkit-text-stroke:0.22px #1e1e1e;">1</span>
<span class="t" id="t92" style="top:400px;font-size:7.3px;line-height:7.3px;color:#1e1e1e;right:506px;transform-origin:100% 50%;transform:translate(0.00px,0.89px) scaleX(0.9202) rotate(0.1deg);-webkit-text-stroke:0.22px #1e1e1e;">0</span>
<span class="t" id="t93" style="top:400px;font-size:7.3px;line-height:7.3px;color:#1e1e1e;left:522px;transform-origin:0 50%;transform:translate(0.50px,0.89px) scaleX(0.8855) rotate(0.1deg);-webkit-text-stroke:0.22px #1e1e1e;">GONCALVES</span>
<span class="t" id="t94" style="top:416px;font-size:7.3px;line-height:7.3px;color:#1e1e1e;left:88px;transform-origin:0 50%;transform:translate(0.50px,0.25px) scaleX(0.9931) rotate(0.1deg);-webkit-text-stroke:0.22px #1e1e1e;">Entrada</span>
<span class="t" id="t95" style="top:416px;font-size:7.3px;line-height:7.3px;color:#1e1e1e;left:151px;transform-origin:0 50%;transform:translate(0.00px,0.25px) scaleX(0.9467) rotate(0.1deg);-webkit-text-stroke:0.22px #1e1e1e;">70281369</span>
<span class="t" id="t96" style="top:416px;font-size:7.3px;line-height:7.3px;color:#1e1e1e;right:768px;transform-origin:100% 50%;transform:translate(0.50px,0.25px) scaleX(0.9851) rotate(0.1deg);-webkit-text-stroke:0.22px #1e1e1e;">26/02/2009</span>
<span class="t" id="t97" style="top:416px;font-size:7.3px;line-height:7.3px;color:#1e1e1e;left:266px;transform-origin:0 50%;transform:translate(0.25px,0.25px) scaleX(0.9134) rotate(0.1deg);-webkit-text-stroke:0.22px #1e1e1e;">019-RECEBIMENTO DE M.PRIMA C/EF</span>
<span class="t" id="t98" style="top:416px;font-size:7.3px;line-height:7.3px;color:#1e1e1e;right:570px;transform-origin:100% 50%;transform:translate(0.00px,0.25px) scaleX(0.9079) rotate(0.1deg);-webkit-text-stroke:0.22px #1e1e1e;">4</span>
<span class="t" id="t99" style="top:416px;font-size:7.3px;line-height:7.3px;color:#1e1e1e;right:506px;transform-origin:100% 50%;transform:translate(0.00px,0.25px) scaleX(0.9202) rotate(0.1deg);-webkit-text-stroke:0.22px #1e1e1e;">0</span>
<span class="t" id="t100" style="top:416px;font-size:7.3px;line-height:7.3px;color:#1e1e1e;left:522px;transform-origin:0 50%;transform:translate(0.50px,0.25px) scaleX(0.9096) rotate(0.1deg);-webkit-text-stroke:0.22px #1e1e1e;">BRUNA</span>
<span class="t" id="t101" style="top:431px;font-size:7.3px;line-height:7.3px;color:#1e1e1e;left:88px;transform-origin:0 50%;transform:translate(0.50px,0.61px) scaleX(0.9931) rotate(0.1deg);-webkit-text-stroke:0.22px #1e1e1e;">Entrada</span>
<span class="t" id="t102" style="top:431px;font-size:7.3px;line-height:7.3px;color:#1e1e1e;left:151px;transform-origin:0 50%;transform:translate(0.00px,0.61px) scaleX(0.9467) rotate(0.1deg);-webkit-text-stroke:0.22px #1e1e1e;">70286877</span>
<span class="t" id="t103" style="top:431px;font-size:7.3px;line-height:7.3px;color:#1e1e1e;right:768px;transform-origin:100% 50%;transform:translate(0.50px,0.61px) scaleX(0.9851) rotate(0.1deg);-webkit-text-stroke:0.22px #1e1e1e;">12/05/2009</span>
<span class="t" id="t104" style="top:431px;font-size:7.3px;line-height:7.3px;color:#1e1e1e;left:266px;transform-origin:0 50%;transform:translate(0.25px,0.61px) scaleX(0.9134) rotate(0.1deg);-webkit-text-stroke:0.22px #1e1e1e;">019-RECEBIMENTO DE M.PRIMA C/EF</span>
<span class="t" id="t105" style="top:431px;font-size:7.3px;line-height:7.3px;color:#1e1e1e;right:570px;transform-origin:100% 50%;transform:translate(0.00px,0.61px) scaleX(0.9093) rotate(0.1deg);-webkit-text-stroke:0.22px #1e1e1e;">10</span>
<span class="t" id="t106" style="top:431px;font-size:7.3px;line-height:7.3px;color:#1e1e1e;right:506px;transform-origin:100% 50%;transform:translate(0.00px,0.61px) scaleX(0.9202) rotate(0.1deg);-webkit-text-stroke:0.22px #1e1e1e;">0</span>
<span class="t" id="t107" style="top:431px;font-size:7.3px;line-height:7.3px;color:#1e1e1e;left:522px;transform-origin:0 50%;transform:translate(0.50px,0.61px) scaleX(0.9096) rotate(0.1deg);-webkit-text-stroke:0.22px #1e1e1e;">BRUNA</span>
<span class="t" id="t108" style="top:446px;font-size:7.3px;line-height:7.3px;color:#1e1e1e;left:88px;transform-origin:0 50%;transform:translate(0.50px,0.97px) scaleX(0.9931) rotate(0.1deg);-webkit-text-stroke:0.22px #1e1e1e;">Entrada</span>
<span class="t" id="t109" style="top:446px;font-size:7.3px;line-height:7.3px;color:#1e1e1e;left:151px;transform-origin:0 50%;transform:translate(0.00px,0.97px) scaleX(0.9467) rotate(0.1deg);-webkit-text-stroke:0.22px #1e1e1e;">70290366</span>
<span class="t" id="t110" style="top:446px;font-size:7.3px;line-height:7.3px;color:#1e1e1e;right:768px;transform-origin:100% 50%;transform:translate(0.50px,0.97px) scaleX(0.9851) rotate(0.1deg);-webkit-text-stroke:0.22px #1e1e1e;">25/06/2009</span>
<span class="t" id="t111" style="top:446px;font-size:7.3px;line-height:7.3px;color:#1e1e1e;left:266px;transform-origin:0 50%;transform:translate(0.25px,0.97px) scaleX(0.9134) rotate(0.1deg);-webkit-text-stroke:0.22px #1e1e1e;">019-RECEBIMENTO DE M.PRIMA C/EF</span>
<span class="t" id="t112" style="top:446px;font-size:7.3px;line-height:7.3px;color:#1e1e1e;right:570px;transform-origin:100% 50%;transform:translate(0.00px,0.97px) scaleX(0.9093) rotate(0.1deg);-webkit-text-stroke:0.22px #1e1e1e;">10</span>
<span class="t" id="t113" style="top:446px;font-size:7.3px;line-height:7.3px;color:#1e1e1e;right:506px;transform-origin:100% 50%;transform:translate(0.00px,0.97px) scaleX(0.9202) rotate(0.1deg);-webkit-text-stroke:0.22px #1e1e1e;">0</span>
<span class="t" id="t114" style="top:446px;font-size:7.3px;line-height:7.3px;color:#1e1e1e;left:522px;transform-origin:0 50%;transform:translate(0.50px,0.97px) scaleX(0.9096) rotate(0.1deg);-webkit-text-stroke:0.22px #1e1e1e;">BRUNA</span>
<span class="t" id="t115" style="top:462px;font-size:7.3px;line-height:7.3px;color:#1e1e1e;left:88px;transform-origin:0 50%;transform:translate(0.50px,0.33px) scaleX(0.9931) rotate(0.1deg);-webkit-text-stroke:0.22px #1e1e1e;">Entrada</span>
<span class="t" id="t116" style="top:462px;font-size:7.3px;line-height:7.3px;color:#1e1e1e;left:151px;transform-origin:0 50%;transform:translate(0.00px,0.33px) scaleX(0.9467) rotate(0.1deg);-webkit-text-stroke:0.22px #1e1e1e;">70290982</span>
<span class="t" id="t117" style="top:462px;font-size:7.3px;line-height:7.3px;color:#1e1e1e;right:768px;transform-origin:100% 50%;transform:translate(0.50px,0.33px) scaleX(0.9851) rotate(0.1deg);-webkit-text-stroke:0.22px #1e1e1e;">14/07/2009</span>
<span class="t" id="t118" style="top:462px;font-size:7.3px;line-height:7.3px;color:#1e1e1e;left:266px;transform-origin:0 50%;transform:translate(0.25px,0.33px) scaleX(0.9134) rotate(0.1deg);-webkit-text-stroke:0.22px #1e1e1e;">019-RECEBIMENTO DE M.PRIMA C/EF</span>
<span class="t" id="t119" style="top:462px;font-size:7.3px;line-height:7.3px;color:#1e1e1e;right:570px;transform-origin:100% 50%;transform:translate(0.00px,0.33px) scaleX(0.9079) rotate(0.1deg);-webkit-text-stroke:0.22px #1e1e1e;">6</span>
<span class="t" id="t120" style="top:462px;font-size:7.3px;line-height:7.3px;color:#1e1e1e;right:506px;transform-origin:100% 50%;transform:translate(0.00px,0.33px) scaleX(0.9202) rotate(0.1deg);-webkit-text-stroke:0.22px #1e1e1e;">0</span>
<span class="t" id="t121" style="top:462px;font-size:7.3px;line-height:7.3px;color:#1e1e1e;left:522px;transform-origin:0 50%;transform:translate(0.50px,0.33px) scaleX(0.9096) rotate(0.1deg);-webkit-text-stroke:0.22px #1e1e1e;">BRUNA</span>
<span class="t" id="t122" style="top:477px;font-size:7.3px;line-height:7.3px;color:#1e1e1e;left:88px;transform-origin:0 50%;transform:translate(0.50px,0.69px) scaleX(0.9931) rotate(0.1deg);-webkit-text-stroke:0.22px #1e1e1e;">Entrada</span>
<span class="t" id="t123" style="top:477px;font-size:7.3px;line-height:7.3px;color:#1e1e1e;left:151px;transform-origin:0 50%;transform:translate(0.00px,0.69px) scaleX(0.9467) rotate(0.1deg);-webkit-text-stroke:0.22px #1e1e1e;">70305699</span>
<span class="t" id="t124" style="top:477px;font-size:7.3px;line-height:7.3px;color:#1e1e1e;right:768px;transform-origin:100% 50%;transform:translate(0.50px,0.69px) scaleX(0.9851) rotate(0.1deg);-webkit-text-stroke:0.22px #1e1e1e;">10/02/2010</span>
<span class="t" id="t125" style="top:477px;font-size:7.3px;line-height:7.3px;color:#1e1e1e;left:266px;transform-origin:0 50%;transform:translate(0.25px,0.69px) scaleX(0.9134) rotate(0.1deg);-webkit-text-stroke:0.22px #1e1e1e;">019-RECEBIMENTO DE M.PRIMA C/EF</span>
<span class="t" id="t126" style="top:477px;font-size:7.3px;line-height:7.3px;color:#1e1e1e;right:570px;transform-origin:100% 50%;transform:translate(0.00px,0.69px) scaleX(0.9093) rotate(0.1deg);-webkit-text-stroke:0.22px #1e1e1e;">20</span>
<span class="t" id="t127" style="top:477px;font-size:7.3px;line-height:7.3px;color:#1e1e1e;right:506px;transform-origin:100% 50%;transform:translate(0.00px,0.69px) scaleX(0.9202) rotate(0.1deg);-webkit-text-stroke:0.22px #1e1e1e;">0</span>
<span class="t" id="t128" style="top:477px;font-size:7.3px;line-height:7.3px;color:#1e1e1e;left:522px;transform-origin:0 50%;transform:translate(0.50px,0.69px) scaleX(0.9096) rotate(0.1deg);-webkit-text-stroke:0.22px #1e1e1e;">BRUNA</span>
<span class="t" id="t129" style="top:493px;font-size:7.3px;line-height:7.3px;color:#1e1e1e;left:88px;transform-origin:0 50%;transform:translate(0.50px,0.05px) scaleX(0.9931) rotate(0.1deg);-webkit-text-stroke:0.22px #1e1e1e;">Entrada</span>
<span class="t" id="t130" style="top:493px;font-size:7.3px;line-height:7.3px;color:#1e1e1e;left:151px;transform-origin:0 50%;transform:translate(0.00px,0.05px) scaleX(0.9467) rotate(0.1deg);-webkit-text-stroke:0.22px #1e1e1e;">70314835</span>
<span class="t" id="t131" style="top:493px;font-size:7.3px;line-height:7.3px;color:#1e1e1e;right:768px;transform-origin:100% 50%;transform:translate(0.50px,0.05px) scaleX(0.9851) rotate(0.1deg);-webkit-text-stroke:0.22px #1e1e1e;">02/06/2010</span>
<span class="t" id="t132" style="top:493px;font-size:7.3px;line-height:7.3px;color:#1e1e1e;left:266px;transform-origin:0 50%;transform:translate(0.25px,0.05px) scaleX(0.9112) rotate(0.1deg);-webkit-text-stroke:0.22px #1e1e1e;">014-ENTRADA DE MATERIA PRIMA</span>
<span class="t" id="t133" style="top:493px;font-size:7.3px;line-height:7.3px;color:#1e1e1e;right:570px;transform-origin:100% 50%;transform:translate(0.00px,0.05px) scaleX(0.9079) rotate(0.1deg);-webkit-text-stroke:0.22px #1e1e1e;">3</span>
<span class="t" id="t134" style="top:493px;font-size:7.3px;line-height:7.3px;color:#1e1e1e;right:506px;transform-origin:100% 50%;transform:translate(0.00px,0.05px) scaleX(0.9202) rotate(0.1deg);-webkit-text-stroke:0.22px #1e1e1e;">0</span>
<span class="t" id="t135" style="top:493px;font-size:7.3px;line-height:7.3px;color:#1e1e1e;left:522px;transform-origin:0 50%;transform:translate(0.50px,0.05px) scaleX(0.9096) rotate(0.1deg);-webkit-text-stroke:0.22px #1e1e1e;">BRUNA</span>
<span class="t" id="t136" style="top:508px;font-size:7.3px;line-height:7.3px;color:#1e1e1e;left:88px;transform-origin:0 50%;transform:translate(0.50px,0.41px) scaleX(0.9931) rotate(0.1deg);-webkit-text-stroke:0.22px #1e1e1e;">Entrada</span>
<span class="t" id="t137" style="top:508px;font-size:7.3px;line-height:7.3px;color:#1e1e1e;left:151px;transform-origin:0 50%;transform:translate(0.00px,0.41px) scaleX(0.9467) rotate(0.1deg);-webkit-text-stroke:0.22px #1e1e1e;">70327716</span>
<span class="t" id="t138" style="top:508px;font-size:7.3px;line-height:7.3px;color:#1e1e1e;right:768px;transform-origin:100% 50%;transform:translate(0.50px,0.41px) scaleX(0.9851) rotate(0.1deg);-webkit-text-stroke:0.22px #1e1e1e;">08/10/2010</span>
<span class="t" id="t139" style="top:508px;font-size:7.3px;line-height:7.3px;color:#1e1e1e;left:266px;transform-origin:0 50%;transform:translate(0.25px,0.41px) scaleX(0.8941) rotate(0.1deg);-webkit-text-stroke:0.22px #1e1e1e;">034-BIPAGEM E EMISSÃO DE ETIQUE</span>
<span class="t" id="t140" style="top:508px;font-size:7.3px;line-height:7.3px;color:#1e1e1e;right:570px;transform-origin:100% 50%;transform:translate(0.00px,0.41px) scaleX(0.9079) rotate(0.1deg);-webkit-text-stroke:0.22px #1e1e1e;">1</span>
<span class="t" id="t141" style="top:508px;font-size:7.3px;line-height:7.3px;color:#1e1e1e;right:506px;transform-origin:100% 50%;transform:translate(0.00px,0.41px) scaleX(0.9202) rotate(0.1deg);-webkit-text-stroke:0.22px #1e1e1e;">0</span>
<span class="t" id="t142" style="top:508px;font-size:7.3px;line-height:7.3px;color:#1e1e1e;left:522px;transform-origin:0 50%;transform:translate(0.50px,0.41px) scaleX(0.9162) rotate(0.1deg);-webkit-text-stroke:0.22px #1e1e1e;">LUCIANA</span></div>
</div>
</body></html>
